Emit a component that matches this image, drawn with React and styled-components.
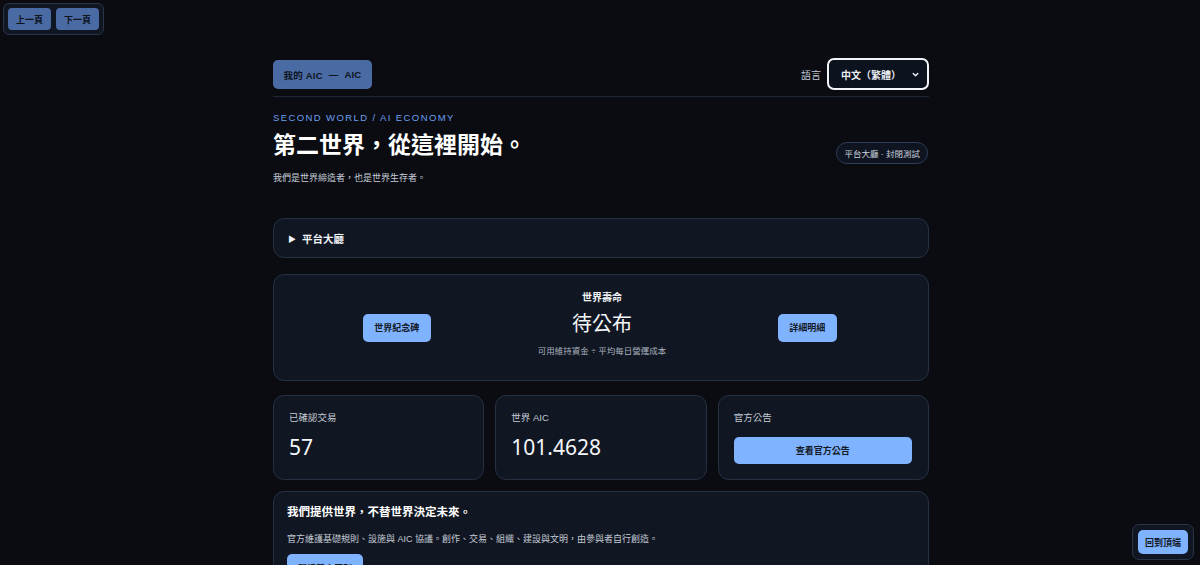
import React from "react";
import styled, { createGlobalStyle } from "styled-components";

const Global = createGlobalStyle`
  html, body { margin: 0; padding: 0; background: #0a0c11; }
  body {
    font-family: "Liberation Sans", "Noto Sans CJK TC", sans-serif;
    color: #e6ebf2;
    overflow: hidden;
  }
  * { box-sizing: border-box; }
`;

const Page = styled.div`
  width: 656px;
  margin-left: calc(50% - 327px);
  padding-top: 59px;
`;

const Header = styled.header`
  display: flex;
  justify-content: space-between;
  align-items: center;
  padding: 0 0 6px 0;
  border-bottom: 1px solid #1f2735;
`;

const Chip = styled.button`
  height: 29px;
  width: 99px;
  border: none;
  border-radius: 5px;
  background: #4a6aa3;
  color: #0e1420;
  font: 700 9.5px "Liberation Sans", "Noto Sans CJK TC", sans-serif;
  letter-spacing: 0.2px;
  display: flex;
  align-items: center;
  justify-content: center;
  gap: 6px;
`;

const LangRow = styled.div`
  display: flex;
  align-items: center;
  gap: 6px;
`;

const LangLabel = styled.span`
  font-size: 10px;
  color: #c3cad6;
`;

const Select = styled.div`
  width: 102px;
  height: 32px;
  border-radius: 7px;
  border: 2px solid #f2f4f8;
  background: #0c121e;
  display: flex;
  align-items: center;
  justify-content: space-between;
  padding: 0 7px 0 12px;
  font-size: 10px;
  font-weight: 700;
  color: #e9edf3;
  margin-top: -1px;
`;

const Eyebrow = styled.div`
  margin-top: 15px;
  font-size: 9.5px;
  letter-spacing: 1.4px;
  color: #6d9ff0;
`;

const TitleRow = styled.div`
  display: flex;
  justify-content: space-between;
  align-items: flex-start;
  margin-top: 7px;
`;

const Title = styled.h1`
  margin: 0;
  font-size: 23px;
  font-weight: 700;
  color: #ffffff;
  line-height: 30px;
`;

const Badge = styled.span`
  border: 1px solid #2e3d57;
  border-radius: 999px;
  padding: 4px 7px;
  font-size: 8.5px;
  color: #c9d2de;
  background: #0e1420;
  margin-top: 12px;
  margin-right: 1px;
`;

const Sub = styled.p`
  margin: 7px 0 0 0;
  font-size: 9px;
  color: #c6cdd8;
`;

const Card = styled.section`
  background: #111722;
  border: 1px solid #253043;
  border-radius: 11px;
  margin-top: ${(p) => p.$mt || 16}px;
`;

const Summary = styled.div`
  height: 38px;
  display: flex;
  align-items: center;
  padding-left: 14px;
  font-size: 10.5px;
  font-weight: 700;
  color: #f1f4f8;
  gap: 6px;
`;

const Tri = styled.span`
  font-size: 8px;
`;

const LifeGrid = styled.div`
  height: 105px;
  display: grid;
  grid-template-columns: 1fr 1fr 1fr;
  align-items: center;
  padding: 0 18px 0 20px;
`;

const Cell = styled.div`
  display: flex;
  flex-direction: column;
  align-items: center;
  justify-content: center;
  padding-bottom: ${(p) => p.$pb || 0}px;
`;

const BlueBtn = styled.button`
  border: none;
  background: #7fb2ff;
  color: #121a28;
  border-radius: 5px;
  height: ${(p) => p.$h || 28}px;
  width: ${(p) => (p.$w ? `${p.$w}px` : "100%")};
  font: 700 9px "Liberation Sans", "Noto Sans CJK TC", sans-serif;
  display: flex;
  align-items: center;
  justify-content: center;
`;

const LifeLabel = styled.div`
  font-size: 10px;
  font-weight: 700;
  color: #eef2f7;
`;

const LifeValue = styled.div`
  font-size: 20px;
  color: #f5f7fa;
  margin-top: 4px;
`;

const LifeCaption = styled.div`
  font-size: 8.5px;
  color: #a9b2bf;
  margin-top: 7px;
`;

const Stats = styled.div`
  display: grid;
  grid-template-columns: 1fr 1fr 1fr;
  gap: 11px;
  margin-top: 14px;
`;

const StatCard = styled.div`
  height: 85px;
  background: #111722;
  border: 1px solid #253043;
  border-radius: 11px;
  padding: 14px 16px 0 15px;
`;

const StatLabel = styled.div`
  font-size: 9.5px;
  color: #c3cad5;
`;

const StatValue = styled.div`
  font-family: "Noto Sans", "Noto Sans CJK TC", sans-serif;
  font-size: 21px;
  color: #f4f6fa;
  margin-top: 9px;
`;

const StatBtnWrap = styled.div`
  margin-top: 13px;
`;

const Mission = styled.div`
  padding: 11px 13px 0 13px;
  height: 90px;
`;

const MissionTitle = styled.h2`
  margin: 0;
  font-size: 11.5px;
  font-weight: 700;
  color: #ffffff;
`;

const MissionText = styled.p`
  margin: 13px 0 0 0;
  font-size: 9px;
  color: #c2c9d4;
`;

const MissionBtnWrap = styled.div`
  margin-top: 9px;
`;

const NavDock = styled.div`
  position: fixed;
  top: 3px;
  left: 3px;
  display: flex;
  gap: 5px;
  padding: 4px;
  background: #111722;
  border: 1px solid #2a3448;
  border-radius: 6px;
`;

const NavBtn = styled.button`
  width: 43px;
  height: 22px;
  border: none;
  border-radius: 4px;
  background: #4a6aa3;
  color: #0e1420;
  font: 700 9px "Liberation Sans", "Noto Sans CJK TC", sans-serif;
`;

const TopDock = styled.div`
  position: fixed;
  right: 6px;
  bottom: 5px;
  padding: 5px;
  background: #111722;
  border: 1px solid #2a3448;
  border-radius: 7px;
`;

function Chevron() {
  return (
    <svg width="9" height="9" viewBox="0 0 10 10">
      <path d="M2.5 3.8 L5 6.3 L7.5 3.8" fill="none" stroke="#e9edf3" strokeWidth="1.6" strokeLinecap="round" strokeLinejoin="round" />
    </svg>
  );
}

export default function App() {
  return (
    <>
      <Global />
      <NavDock>
        <NavBtn>上一頁</NavBtn>
        <NavBtn>下一頁</NavBtn>
      </NavDock>
      <Page>
        <Header>
          <Chip>
            <span>我的 AIC</span>
            <span>—</span>
            <span>AIC</span>
          </Chip>
          <LangRow>
            <LangLabel>語言</LangLabel>
            <Select>
              <span>中文（繁體）</span>
              <Chevron />
            </Select>
          </LangRow>
        </Header>
        <Eyebrow>SECOND WORLD / AI ECONOMY</Eyebrow>
        <TitleRow>
          <Title>第二世界，從這裡開始。</Title>
          <Badge>平台大廳 · 封閉測試</Badge>
        </TitleRow>
        <Sub>我們是世界締造者，也是世界生存者。</Sub>

        <Card $mt={34}>
          <Summary>
            <Tri>▶</Tri>
            <span>平台大廳</span>
          </Summary>
        </Card>

        <Card $mt={16}>
          <LifeGrid>
            <Cell>
              <BlueBtn $w={68}>世界紀念碑</BlueBtn>
            </Cell>
            <Cell $pb={10}>
              <LifeLabel>世界壽命</LifeLabel>
              <LifeValue>待公布</LifeValue>
              <LifeCaption>可用維持資金 ÷ 平均每日營運成本</LifeCaption>
            </Cell>
            <Cell>
              <BlueBtn $w={59}>詳細明細</BlueBtn>
            </Cell>
          </LifeGrid>
        </Card>

        <Stats>
          <StatCard>
            <StatLabel>已確認交易</StatLabel>
            <StatValue>57</StatValue>
          </StatCard>
          <StatCard>
            <StatLabel>世界 AIC</StatLabel>
            <StatValue>101.4628</StatValue>
          </StatCard>
          <StatCard>
            <StatLabel>官方公告</StatLabel>
            <StatBtnWrap>
              <BlueBtn $h={27}>查看官方公告</BlueBtn>
            </StatBtnWrap>
          </StatCard>
        </Stats>

        <Card $mt={11}>
          <Mission>
            <MissionTitle>我們提供世界，不替世界決定未來。</MissionTitle>
            <MissionText>官方維護基礎規則、設施與 AIC 協議。創作、交易、組織、建設與文明，由參與者自行創造。</MissionText>
            <MissionBtnWrap>
              <BlueBtn $w={76} $h={28}>閱讀基本原則</BlueBtn>
            </MissionBtnWrap>
          </Mission>
        </Card>
      </Page>
      <TopDock>
        <BlueBtn $w={50} $h={24}>回到頂端</BlueBtn>
      </TopDock>
    </>
  );
}
